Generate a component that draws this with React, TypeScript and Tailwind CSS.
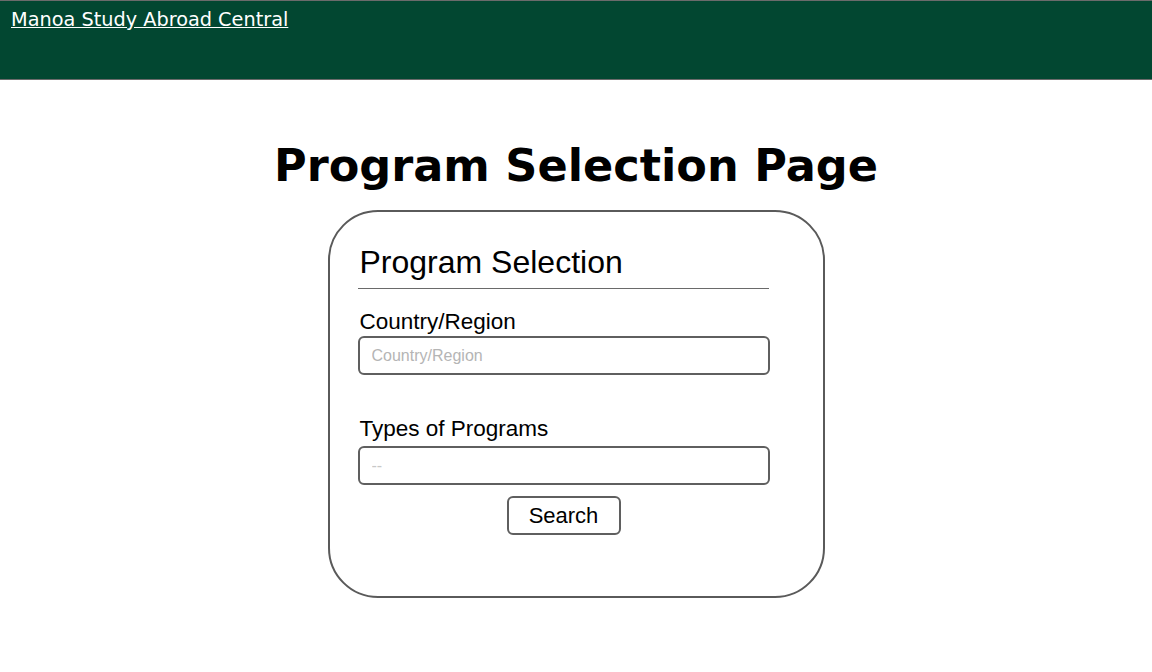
export default function App() {
  return (
    <div className="min-h-screen bg-white">
      {/* Top bar */}
      <div className="h-[80px] bg-[#024731] border-y border-[#6b6b6b] pl-[11px] pt-[7px]">
        <a
          href="#"
          className="text-white underline text-[19.3px] leading-[24px] font-['Verdana','DejaVu_Sans',sans-serif]"
        >
          Manoa Study Abroad Central
        </a>
      </div>

      <div className="flex flex-col items-center">
        <h1 className="mt-[58px] text-[44.6px] leading-[56px] font-bold text-black font-['Verdana','DejaVu_Sans',sans-serif]">
          Program Selection Page
        </h1>

        <div className="mt-[16px] w-[497px] h-[388px] border-2 border-[#5a5a5a] rounded-[50px] pl-[28px] pt-[30px] font-['Liberation_Sans',Arial,sans-serif]">
          <div className="w-[412px]">
            <h2 className="text-[32px] leading-[40px] text-black pl-[2px]">Program Selection</h2>
            <hr className="mt-[6px] border-t border-[#6a6a6a] w-[411px]" />

            <label className="block mt-[20px] pl-[2px] text-[22.5px] leading-[26px] text-black">Country/Region</label>
            <input
              type="text"
              placeholder="Country/Region"
              className="block mt-[1px] w-[412px] h-[39px] border-2 border-[#5f5f5f] rounded-[6px] px-[12px] text-[16px] outline-none placeholder:text-[#b5b5b5]"
            />

            <label className="block mt-[41px] pl-[2px] text-[22.5px] leading-[26px] text-black">Types of Programs</label>
            <input
              type="text"
              placeholder="--"
              className="block mt-[4px] w-[412px] h-[39px] border-2 border-[#5f5f5f] rounded-[6px] px-[12px] text-[16px] outline-none placeholder:text-[#c8c8c8]"
            />

            <div className="flex justify-center mt-[11px]">
              <button className="w-[114px] h-[39px] border-2 border-[#5f5f5f] rounded-[6px] bg-white text-[22px] text-black">
                Search
              </button>
            </div>
          </div>
        </div>
      </div>
    </div>
  );
}
